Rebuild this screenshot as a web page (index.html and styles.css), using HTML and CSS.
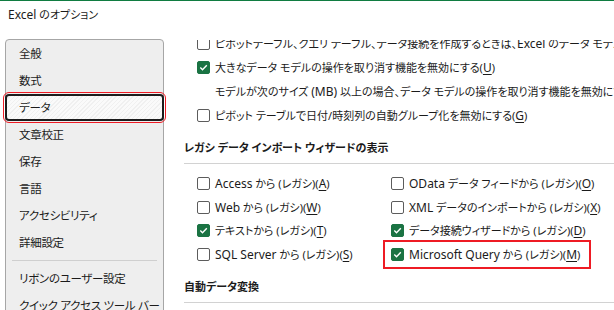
FILE: index.html
```html
<!DOCTYPE html>
<html lang="ja">

<head>
    <meta charset="UTF-8">
    <meta name="viewport" content="width=device-width, initial-scale=1.0">
    <title>Excel のオプション</title>
    <link rel="stylesheet" href="styles.css">
</head>

<body>
    <div id="window">
        <div class="title-bar"><span class="en">Excel</span> のオプション</div>
        <div class="main">
            <ul class="side-nav">
                <li>全般</li>
                <li>数式</li>
                <li class="selected">データ</li>
                <li>文章校正</li>
                <li>保存</li>
                <li>言語</li>
                <li>アクセシビリティ</li>
                <li>詳細設定</li>
                <li class="sep"></li>
                <li>リボンのユーザー設定</li>
                <li>クイック アクセス ツール バー</li>
            </ul>

            <div class="content">
                <div class="opt first"><span class="box"></span><span class="label">ピボットテーブル、クエリ テーブル、データ接続を作成するときは、<span class="en">Excel</span> のデータ モデルを優先する</span></div>
                <div class="opt"><span class="box checked"></span><span class="label">大きなデータ モデルの操作を取り消す機能を無効にする(<u>U</u>)</span></div>
                <div class="opt plain"><span class="label">モデルが次のサイズ <span class="en">(MB)</span> 以上の場合、データ モデルの操作を取り消す機能を無効にする</span></div>
                <div class="opt"><span class="box"></span><span class="label">ピボット テーブルで日付/時刻列の自動グループ化を無効にする(<u>G</u>)</span></div>

                <div class="section-head">レガシ データ インポート ウィザードの表示</div>
                <div class="opt-grid">
                    <div class="opt"><span class="box"></span><span class="label"><span class="en">Access</span> から (レガシ)(<u>A</u>)</span></div>
                    <div class="opt"><span class="box"></span><span class="label"><span class="en">OData</span> データ フィードから (レガシ)(<u>O</u>)</span></div>
                    <div class="opt"><span class="box"></span><span class="label"><span class="en">Web</span> から (レガシ)(<u>W</u>)</span></div>
                    <div class="opt"><span class="box"></span><span class="label"><span class="en">XML</span> データのインポートから (レガシ)(<u>X</u>)</span></div>
                    <div class="opt"><span class="box checked"></span><span class="label">テキストから (レガシ)(<u>T</u>)</span></div>
                    <div class="opt"><span class="box checked"></span><span class="label">データ接続ウィザードから (レガシ)(<u>D</u>)</span></div>
                    <div class="opt"><span class="box"></span><span class="label"><span class="en">SQL Server</span> から (レガシ)(<u>S</u>)</span></div>
                    <div class="opt marked"><span class="box checked"></span><span class="label"><span class="en">Microsoft Query</span> から (レガシ)(<u>M</u>)</span></div>
                </div>

                <div class="section-head">自動データ変換</div>
            </div>
        </div>
    </div>
</body>

</html>
```

FILE: styles.css
```css
* {
    margin: 0;
    padding: 0;
    box-sizing: border-box;
}

body {
    width: 614px;
    height: 310px;
    overflow: hidden;
    background: #fff;
    color: #1b1b1b;
    font-family: "Noto Sans", "Noto Sans CJK JP", sans-serif;
    font-feature-settings: "palt";
    font-size: 11px;
}

/* latin words are a bit larger than the kana next to them */
.en {
    font-size: 12px;
}

ul {
    list-style: none;
}

#window {
    height: 310px;
    border-top: 1px solid #107c41;
}

.title-bar {
    height: 36px;
    padding: 6px 0 0 8px;
    line-height: 16px;
}

.main {
    display: flex;
    height: 273px;
}

/* left menu */
.side-nav {
    width: 159px;
    height: 300px;
    margin: 2px 0 0 5px;
    background: #eeeeee;
    border: 1px solid #a6a6a6;
    border-radius: 4px 4px 0 0;
    flex-shrink: 0;
    font-size: 11.5px;
    letter-spacing: -0.3px;
}

.side-nav li {
    height: 27px;
    line-height: 27px;
    padding-left: 13px;
    white-space: nowrap;
}

.side-nav .selected {
    margin: 0 -1px;
    padding-left: 12px;
    line-height: 23px;
    border: 2px solid #1c1c1c;
    border-radius: 4px;
    background: repeating-linear-gradient(135deg, #fafafa 0 2px, #f0f0f0 2px 3px);
    outline: 1px solid #ee1b24;
    outline-offset: 1px;
}

.side-nav .sep {
    height: 9px;
    margin: 0 6px;
    border-bottom: 1px solid #cfcfcf;
    position: relative;
    top: -4px;
}

/* right side */
.content {
    flex: 1;
    margin: 3px 0 0 20px;
    overflow: hidden;
}

.opt {
    display: flex;
    align-items: center;
    height: 24px;
    padding-left: 13px;
    white-space: nowrap;
}

.opt.first {
    margin-top: -9px;
}

.opt.plain {
    padding-left: 31px;
}

.box {
    width: 13px;
    height: 13px;
    margin-right: 5px;
    border: 1px solid #5c5c5c;
    border-radius: 2px;
    background: #fff;
    flex-shrink: 0;
}

.box.checked {
    border-color: #1a7343;
    background: #1a7343 url("data:image/svg+xml,%3Csvg xmlns='http://www.w3.org/2000/svg' viewBox='0 0 11 11'%3E%3Cpath d='M2.3 5.6l2.2 2.2 4.3-4.5' fill='none' stroke='%23fff' stroke-width='1.4'/%3E%3C/svg%3E") center / 11px 11px no-repeat;
}

u {
    font-size: 12px;
    text-decoration-thickness: 1px;
    text-underline-offset: 2px;
}

.section-head {
    height: 28px;
    margin-top: 9px;
    padding-top: 3px;
    font-weight: bold;
    border-bottom: 1px solid #d2d2d2;
}

.opt-grid {
    display: grid;
    grid-template-columns: 194px 1fr;
    grid-auto-rows: 23.5px;
    padding-top: 8px;
}

.opt-grid .opt {
    height: 23.5px;
}

.opt.marked {
    justify-self: start;
    margin-left: 8px;
    padding: 0 8px 0 5px;
    outline: 2px solid #ee1b24;
    outline-offset: 1px;
}
```
